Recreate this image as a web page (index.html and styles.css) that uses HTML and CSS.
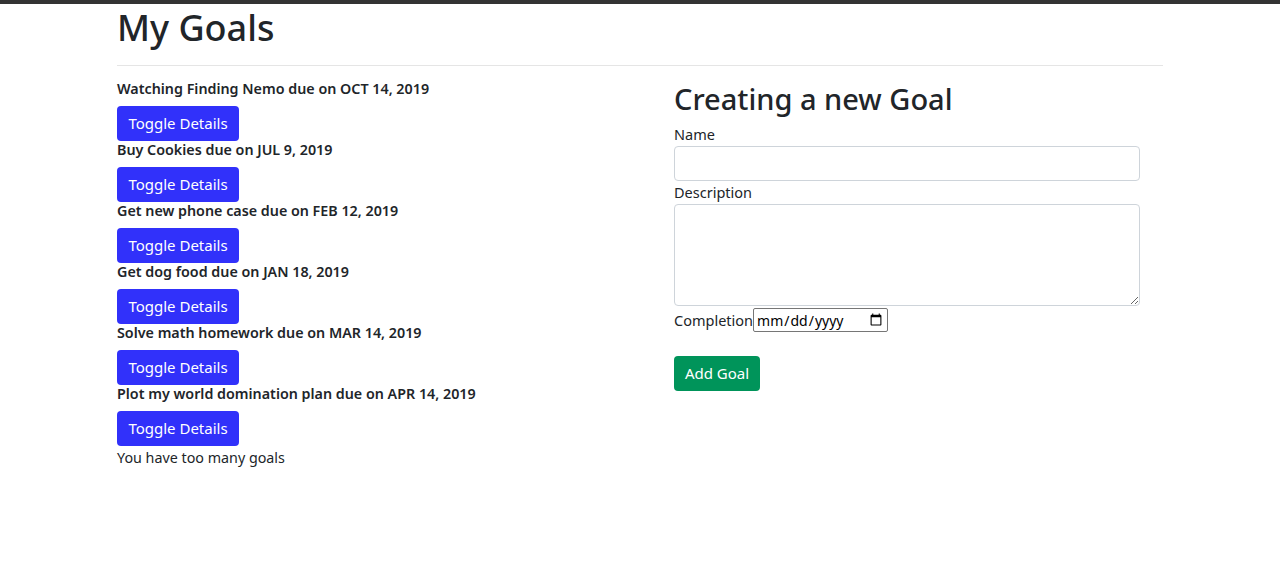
FILE: index.html
```html
<!DOCTYPE html>
<html>
<head>
<meta charset="utf-8">
<link rel="stylesheet" href="styles.css">
</head>
<body>
<div class="topbar"></div>
<div class="container">
  <h1 class="title">My Goals</h1>
  <hr class="divider">
  <div class="columns">
    <div class="goals">
      <div class="goal">
        <h6 class="goal-name">Watching Finding Nemo due on OCT 14, 2019</h6>
        <button class="btn btn-blue">Toggle Details</button>
      </div>
      <div class="goal">
        <h6 class="goal-name">Buy Cookies due on JUL 9, 2019</h6>
        <button class="btn btn-blue">Toggle Details</button>
      </div>
      <div class="goal">
        <h6 class="goal-name">Get new phone case due on FEB 12, 2019</h6>
        <button class="btn btn-blue">Toggle Details</button>
      </div>
      <div class="goal">
        <h6 class="goal-name">Get dog food due on JAN 18, 2019</h6>
        <button class="btn btn-blue">Toggle Details</button>
      </div>
      <div class="goal">
        <h6 class="goal-name">Solve math homework due on MAR 14, 2019</h6>
        <button class="btn btn-blue">Toggle Details</button>
      </div>
      <div class="goal">
        <h6 class="goal-name">Plot my world domination plan due on APR 14, 2019</h6>
        <button class="btn btn-blue">Toggle Details</button>
      </div>
      <p class="warning">You have too many goals</p>
    </div>
    <form class="new-goal">
      <h2 class="form-title">Creating a new Goal</h2>
      <label class="field-label" for="name">Name</label>
      <input class="field" id="name" type="text">
      <label class="field-label" for="desc">Description</label>
      <textarea class="field field-area" id="desc"></textarea>
      <div class="completion">
        <label class="completion-label" for="date">Completion</label>
        <input class="date" id="date" type="date">
      </div>
      <button type="button" class="btn btn-green">Add Goal</button>
    </form>
  </div>
</div>
</body>
</html>
```

FILE: styles.css
```css
* { box-sizing: border-box; }
body {
  margin: 0;
  font-family: "Noto Sans", "Open Sans", sans-serif;
  color: #212529;
  background: #fff;
}
.topbar {
  height: 4px;
  background: #333;
}
.container {
  width: 1046px;
  margin: 0 auto;
}
.title {
  margin: 0 0 13px;
  font-size: 36px;
  font-weight: 500;
  line-height: 48px;
}
.divider {
  margin: 0 0 14px;
  border: 0;
  border-top: 1px solid rgba(0,0,0,0.1);
}
.columns {
  display: grid;
  grid-template-columns: 557px 466px;
}
.goal-name {
  margin: 0 0 8px;
  font-size: 14.3px;
  font-weight: 600;
  line-height: 18px;
}
.btn {
  border: 0;
  border-radius: 4px;
  font-family: inherit;
  font-size: 15px;
  line-height: 35px;
  height: 35px;
  padding: 0;
  color: #fff;
  white-space: nowrap;
  text-align: center;
  cursor: pointer;
}
.btn-blue {
  background: #3131fa;
  width: 122px;
  display: block;
}
.warning {
  margin: 0;
  font-size: 14.3px;
  line-height: 24px;
}
.new-goal {
  display: flex;
  flex-direction: column;
  align-items: flex-start;
}
.form-title {
  margin: 1px 0 6px;
  font-size: 29px;
  font-weight: 500;
  line-height: 36px;
}
.field-label {
  font-size: 14.5px;
  line-height: 23px;
}
.field {
  width: 466px;
  height: 35px;
  border: 1px solid #ced4da;
  border-radius: 4px;
  font-family: inherit;
  font-size: 16px;
  padding: 6px 12px;
}
.field-area {
  height: 102px;
  resize: vertical;
}
.completion {
  display: flex;
  align-items: center;
  margin-top: 2px;
}
.completion-label {
  font-size: 14.5px;
  line-height: 24px;
}
.date {
  width: 135px;
  height: 24px;
  font-family: inherit;
  font-size: 14px;
  border: 1px solid #767676;
  border-radius: 2px;
  padding: 0 2px;
}
.btn-green {
  margin-top: 24px;
  background: #00945a;
  width: 86px;
}
```
